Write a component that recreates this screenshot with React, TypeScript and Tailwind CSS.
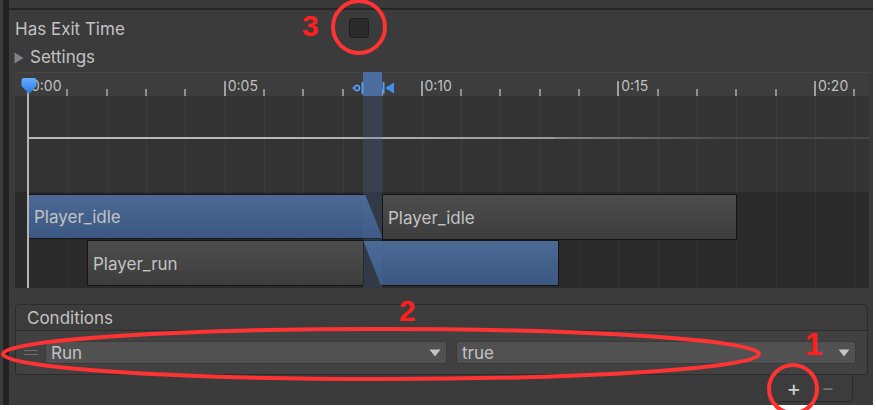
import React from "react";

const T0 = 13;
const STEP = 39.35;

function Ruler() {
  const ticks = Array.from({ length: 22 }, (_, i) => i);
  return (
    <div className="relative h-[24px] bg-[#3d3d3d] border-t border-[#474747]">
      {ticks.map((i) => {
        const x = T0 + i * STEP;
        const major = i % 5 === 0;
        return (
          <React.Fragment key={i}>
            <div
              className={major ? "absolute bottom-0 w-[2px] h-[15px] bg-[#a0a0a0]" : "absolute bottom-0 w-[2px] h-[7px] bg-[#8f8f8f]"}
              style={{ left: x - 1 }}
            />
            {major && (
              <div className="absolute top-[5px] text-[14px] leading-[15px] text-[#c0c0c0]" style={{ left: x + 3 }}>
                {`0:${String(i).padStart(2, "0")}`}
              </div>
            )}
          </React.Fragment>
        );
      })}
    </div>
  );
}

function GridLines({ color }: { color: string }) {
  const ticks = Array.from({ length: 22 }, (_, i) => i);
  return (
    <>
      {ticks.map((i) => (
        <div key={i} className="absolute top-0 bottom-0 w-px" style={{ left: T0 + i * STEP, background: color }} />
      ))}
    </>
  );
}

function Clip({ label, blue, className, clip }: { label?: string; blue?: boolean; className: string; clip?: string }) {
  return (
    <div
      className={
        "absolute flex items-center border border-[#151515] text-[17px] text-[#c2c2c2] " +
        (blue ? "bg-gradient-to-b from-[#4c6a95] to-[#3b5782] " : "bg-gradient-to-b from-[#4d4d4d] to-[#3d3d3d] ") +
        className
      }
      style={clip ? { clipPath: clip } : undefined}
    >
      {label && <span className="pl-[5px] pt-[3px]">{label}</span>}
    </div>
  );
}

function Timeline() {
  return (
    <div className="relative h-[216px] w-[854px] flex flex-col">
      <Ruler />
      <div className="relative h-[96px] bg-[#333333]">
        <GridLines color="#3c3c3c" />
        <div className="absolute left-[13px] top-[41px] h-[2px] w-[530px] bg-gradient-to-r from-[#b8b8b8] via-[#b8b8b8] to-[#9a9a9a]" />
        <div className="absolute left-[540px] top-[41px] h-[2px] w-[314px] bg-gradient-to-r from-[#8a8a8a] via-[#4e4e4e] to-[#464646]" />
      </div>
      <div className="relative flex-1 bg-[#2a2a2a]">
        <GridLines color="#333333" />
        <Clip blue label="Player_idle" className="left-[13px] top-[2px] w-[355px] h-[45px]" clip="polygon(0 0, 337px 0, 355px 100%, 0 100%)" />
        <Clip label="Player_idle" className="left-[367px] top-[2px] w-[355px] h-[46px]" />
        <Clip label="Player_run" className="left-[72px] top-[48px] w-[277px] h-[46px]" />
        <Clip blue className="left-[348px] top-[48px] w-[196px] h-[46px]" clip="polygon(0 0, 100% 0, 100% 100%, 18px 100%)" />
      </div>
      {/* transition highlight */}
      <div className="absolute left-[348px] top-0 w-[19px] h-[24px] bg-[#4a6c9e]" />
      <div className="absolute left-[348px] top-[24px] w-[19px] bottom-0 bg-[#4a6c9e]/25" />
      {/* transition markers */}
      <svg className="absolute left-[336px] top-[9px]" width="13" height="14" viewBox="0 0 13 14">
        <path d="M0.5 7 L6 3 L6 11 Z" fill="#3d7fd0" />
        <circle cx="6" cy="7" r="2.6" fill="#2c4f7c" stroke="#6aa3e8" strokeWidth="1.3" />
        <rect x="10.5" y="1" width="2" height="12" fill="#5d9ae6" />
      </svg>
      <svg className="absolute left-[367px] top-[9px]" width="13" height="14" viewBox="0 0 13 14">
        <rect x="0.5" y="1" width="2" height="12" fill="#5d9ae6" />
        <path d="M3 7 L12 1.5 L12 12.5 Z" fill="#3d8ff0" />
      </svg>
      {/* playhead */}
      <div className="absolute left-[12px] top-[20px] bottom-0 w-[2px] bg-[#b4b4b4]" />
      <svg className="absolute left-[6px] top-[5px]" width="16" height="18" viewBox="0 0 16 18">
        <defs>
          <linearGradient id="ph" x1="0" y1="0" x2="0" y2="1">
            <stop offset="0" stopColor="#64adff" />
            <stop offset="1" stopColor="#2a78dc" />
          </linearGradient>
        </defs>
        <path d="M3 1 H13 Q15.5 1 15.5 3.5 V9 L8 17 L0.5 9 V3.5 Q0.5 1 3 1 Z" fill="url(#ph)" />
      </svg>
    </div>
  );
}

function Dropdown({ label, className }: { label: string; className: string }) {
  return (
    <div className={"h-[23px] flex items-center justify-between rounded-[3px] bg-[#515151] border border-[#3a3a3a] pl-[5px] pr-[5px] " + className}>
      <span className="text-[17px] leading-none text-[#c2c2c2] pt-[2px]">{label}</span>
      <svg width="12" height="8" viewBox="0 0 12 8">
        <path d="M0.5 0.5 H11.5 L6 7.5 Z" fill="#c4c4c4" />
      </svg>
    </div>
  );
}

export default function App() {
  return (
    <div className="relative w-[876px] h-[410px] overflow-hidden bg-white font-['Inter','Noto_Sans',sans-serif]">
      <div className="w-[873px] h-[405px] flex bg-[#3b3b3b]">
        <div className="w-[3px] bg-[#3c3c3c]" />
        <div className="w-[6px] bg-[#222222]" />
        <div className="flex-1 flex flex-col">
          <div className="h-[10px] bg-[#393939] border-b-2 border-[#262626]" />
          <div className="pl-[6px] pr-[4px] flex flex-col">
            <div className="h-[36px] flex items-center">
              <span className="w-[334px] text-[17px] text-[#c2c2c2] pt-[3px]">Has Exit Time</span>
              <div className="w-[20px] h-[20px] rounded-[3px] bg-[#2a2a2a] border border-[#1e1e1e]" />
            </div>
            <div className="h-[22px] flex items-center">
              <svg width="10" height="12" viewBox="0 0 10 12" className="ml-[-1px] mt-[1px]">
                <path d="M0.5 0.5 L9.5 6 L0.5 11.5 Z" fill="#828282" />
              </svg>
              <span className="ml-[6px] text-[17px] text-[#c2c2c2] pt-[2px]">Settings</span>
            </div>
            <div className="mt-[4px]">
              <Timeline />
            </div>
            <div className="mt-[16px] w-[853px] flex flex-col">
              <div className="h-[27px] flex items-center rounded-t-[4px] bg-[#3c3c3c] border border-[#2c2c2c] pl-[11px]">
                <span className="text-[17px] text-[#c2c2c2] pt-[3px]">Conditions</span>
              </div>
              <div className="h-[44px] flex items-center bg-[#414141] border-x border-b border-[#2c2c2c] rounded-b-[3px]">
                <div className="w-[29px] flex flex-col items-center gap-[3px] pl-[1px]">
                  <div className="w-[14px] h-px bg-[#6e6e6e]" />
                  <div className="w-[14px] h-px bg-[#6e6e6e]" />
                </div>
                <Dropdown label="Run" className="w-[402px]" />
                <Dropdown label="true" className="ml-[9px] w-[400px]" />
              </div>
              <div className="flex justify-end pr-[15px]">
                <div className="w-[84px] h-[27px] flex items-center justify-center gap-[20px] bg-[#3c3c3c] border-x border-b border-[#2c2c2c] rounded-b-[4px] pr-[1px]">
                  <span className="text-[22px] leading-none text-[#cfcfcf]">+</span>
                  <span className="text-[20px] leading-none text-[#747474]">−</span>
                </div>
              </div>
            </div>
          </div>
        </div>
      </div>

      {/* annotations */}
      <svg className="absolute inset-0 pointer-events-none" width="876" height="410" viewBox="0 0 876 410">
        <circle cx="359" cy="27" r="26" fill="none" stroke="#ff3333" strokeWidth="4" />
        <ellipse cx="381" cy="354" rx="378" ry="25" fill="none" stroke="#ff3333" strokeWidth="4" />
        <circle cx="793" cy="389" r="24" fill="none" stroke="#ff3333" strokeWidth="4" />
      </svg>
      <div className="absolute left-[302px] top-[9px] text-[30px] font-bold leading-[34px] text-[#ff1f1f] font-['Liberation_Sans',sans-serif]">3</div>
      <div className="absolute left-[399px] top-[294px] text-[30px] font-bold leading-[34px] text-[#ff1f1f] font-['Liberation_Sans',sans-serif]">2</div>
      <div className="absolute left-[805px] top-[327px] text-[32px] font-bold leading-[34px] text-[#ff1f1f] font-['Liberation_Sans',sans-serif]">1</div>
    </div>
  );
}
